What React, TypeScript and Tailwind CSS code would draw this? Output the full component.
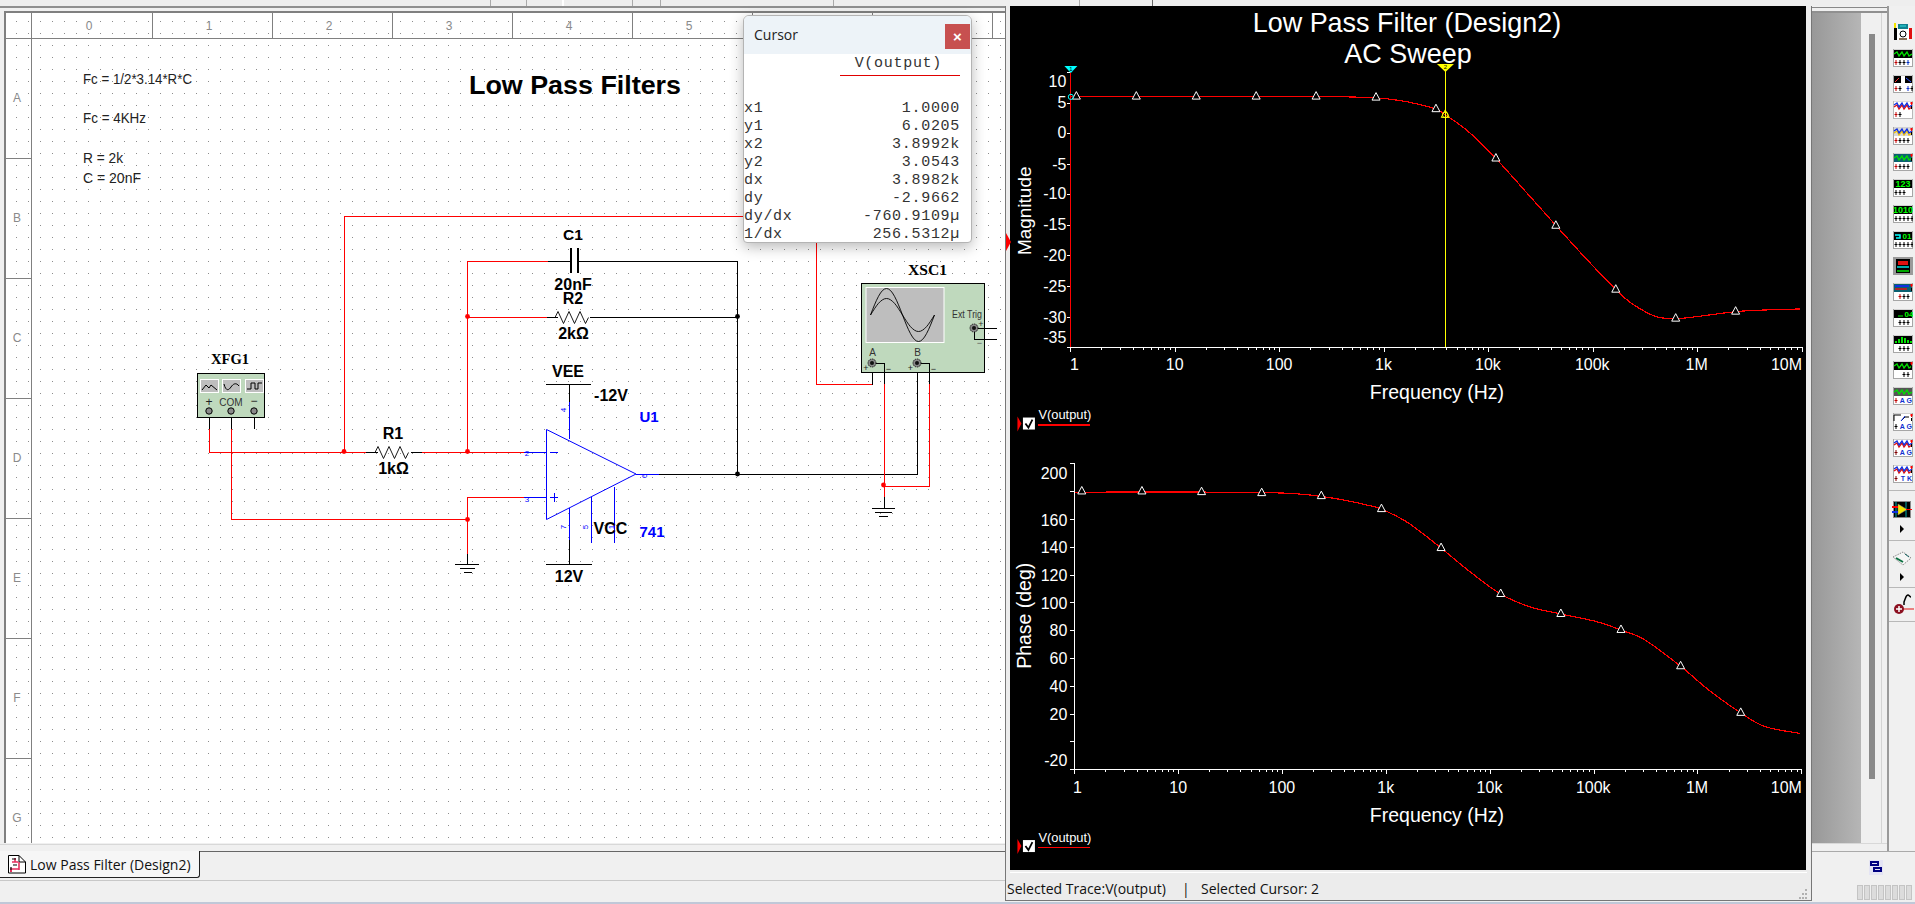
import React from "react";

const SANS = "'Liberation Sans', Arial, sans-serif";
const SERIF = "'Liberation Serif', serif";
const RED = "#ff0000";
const BLUE = "#0000ff";

type TextProps = {
  x: number;
  y: number;
  size: number;
  fill?: string;
  bold?: boolean;
  anchor?: "start" | "middle" | "end";
  family?: string;
  width?: number;
  rotate?: number;
  children: React.ReactNode;
};

const T = ({ x, y, size, fill = "#000", bold, anchor = "middle", family = SANS, width, rotate, children }: TextProps) => (
  <text
    x={x}
    y={y}
    fontSize={size}
    fill={fill}
    fontWeight={bold ? 700 : 400}
    textAnchor={anchor}
    fontFamily={family}
    dominantBaseline="central"
    textLength={width}
    lengthAdjust={width ? "spacingAndGlyphs" : undefined}
    transform={rotate ? `rotate(${rotate} ${x} ${y})` : undefined}
  >
    {children}
  </text>
);

const Wire = ({ d, c = "#000", w = 1 }: { d: string; c?: string; w?: number }) => (
  <path d={d} fill="none" stroke={c} strokeWidth={w} shapeRendering="crispEdges" />
);

const Dot = ({ x, y, c = RED }: { x: number; y: number; c?: string }) => <circle cx={x} cy={y} r={2.4} fill={c} />;

const Zig = ({ x, y }: { x: number; y: number }) => {
  const s = 5.5;
  const pts = [
    [x, y],
    [x + 3, y - 6],
    [x + 3 + s, y + 6],
    [x + 3 + s * 2, y - 6],
    [x + 3 + s * 3, y + 6],
    [x + 3 + s * 4, y - 6],
    [x + 3 + s * 5, y + 6],
    [x + 3 + s * 5 + 3, y],
  ];
  return <polyline points={pts.map((p) => p.join(",")).join(" ")} fill="none" stroke="#000" strokeWidth={0.9} />;
};

const Term = ({ x, y, r = 4 }: { x: number; y: number; r?: number }) => (
  <g>
    <circle cx={x} cy={y} r={r} fill="#8a8a8a" stroke="#000" strokeWidth={0.8} strokeDasharray="1.5 0.8" />
    <circle cx={x} cy={y} r={r - 2} fill="#111" />
  </g>
);

const sine = (amp: number) => {
  const out: string[] = [];
  for (let i = 0; i <= 64; i += 2) {
    out.push(`${870.5 + i},${(315 - amp * Math.sin((2 * Math.PI * i) / 64)).toFixed(1)}`);
  }
  return out.join(" ");
};

const Schematic = () => {
  const cols = [152, 272, 392, 512, 632, 752, 872, 992];
  const rows = [158, 278, 398, 518, 638, 758];
  return (
    <svg width={999} height={830} viewBox="6 13 999 830" className="block bg-white">
      <defs>
        <pattern id="grid" x={4} y={9} width={12} height={12} patternUnits="userSpaceOnUse">
          <rect width={1} height={1} fill="#8c8c8c" />
        </pattern>
      </defs>
      <rect x={6} y={13} width={999} height={830} fill="url(#grid)" />

      <Wire d="M6 38.5H1005M31.5 13V843" c="#808080" />
      {cols.map((x) => (
        <Wire key={x} d={`M${x + 0.5} 13V38`} c="#808080" />
      ))}
      {rows.map((y) => (
        <Wire key={y} d={`M6 ${y + 0.5}H31`} c="#808080" />
      ))}
      {["0", "1", "2", "3", "4", "5", "6", "7"].map((l, i) => (
        <T key={l} x={89 + i * 120} y={26} size={12} fill="#8a8a8a">
          {l}
        </T>
      ))}
      {["A", "B", "C", "D", "E", "F", "G"].map((l, i) => (
        <T key={l} x={17} y={98 + i * 120} size={12} fill="#8a8a8a">
          {l}
        </T>
      ))}

      <T x={83} y={78.5} size={14.5} anchor="start" fill="#222" width={109}>
        Fc = 1/2*3.14*R*C
      </T>
      <T x={83} y={118} size={14.5} anchor="start" fill="#222" width={63}>
        Fc = 4KHz
      </T>
      <T x={83} y={157.5} size={14.5} anchor="start" fill="#222" width={40}>
        R = 2k
      </T>
      <T x={83} y={177.5} size={14.5} anchor="start" fill="#222" width={58}>
        C = 20nF
      </T>
      <T x={575} y={85} size={25} bold width={212}>
        Low Pass Filters
      </T>

      {/* wires into the scope, passing under the cursor window */}
      <Wire d="M344.5 452V216.5H816.5V384.5H872.5" c={RED} />
      <Wire d="M872.5 384.5V363" />
      <Wire d="M209.5 411V429" />
      <Wire d="M209.5 429V452.5H366" c={RED} />
      <Wire d="M366 452.5H378M411 452.5H422" />
      <Wire d="M422 452.5H524" c={RED} />
      <Wire d="M524 452.5H547" c={BLUE} />
      <Wire d="M231.5 411V429" />
      <Wire d="M231.5 429V519.5H467.5" c={RED} />
      <Wire d="M467.5 554V497.5H524" c={RED} />
      <Wire d="M524 497.5H547" c={BLUE} />
      <Wire d="M467.5 554V564.5" />
      <Wire d="M455 564.5H479M460 568.5H475M464 572.5H472" />
      <Wire d="M254.5 411V429" />

      <Wire d="M467.5 452V261.5H548" c={RED} />
      <Wire d="M548 261.5H570M578 261.5H737.5V474.5" />
      <Wire d="M570.5 248V273M571.5 248V273M577.5 248V273M578.5 248V273" />
      <Wire d="M467.5 317.5H547" c={RED} />
      <Wire d="M547 317.5H558M590 317.5H737.5" />
      <Zig x={555} y={317.5} />
      <Zig x={375} y={452.5} />

      <Dot x={344} y={451.5} />
      <Dot x={467.5} y={451.5} />
      <Dot x={467.5} y={316.5} />
      <Dot x={467.5} y={519.5} />
      <Dot x={737.5} y={316.5} c="#000" />
      <Dot x={737.5} y={474} c="#000" />
      <Dot x={883.5} y={485} />

      <T x={573} y={234} size={15.5} bold>
        C1
      </T>
      <T x={573} y={284} size={16} bold>
        20nF
      </T>
      <T x={573} y={298} size={16} bold>
        R2
      </T>
      <T x={573.5} y={333} size={16} bold>
        2kΩ
      </T>
      <T x={393} y={433} size={16} bold>
        R1
      </T>
      <T x={393.5} y={468} size={16} bold>
        1kΩ
      </T>

      {/* op amp */}
      <polygon points="546.5,429.5 546.5,519.5 636,474" fill="none" stroke={BLUE} strokeWidth={1} />
      <Wire d="M569.5 402V439M569.5 508V540M591.5 497V543M614.5 487V543M636 474.5H659M550 452.5H558M550 497.5H558M554.5 493V502" c={BLUE} />
      <Wire d="M569.5 384.5V402M569.5 540V564.5M546 384.5H591M546 564.5H592M659 474.5H917.5V363" />
      <T x={563.5} y={410} size={8} fill={BLUE} rotate={-90}>
        4
      </T>
      <T x={527} y={453} size={8} fill={BLUE}>
        2
      </T>
      <T x={527} y={499} size={8} fill={BLUE}>
        3
      </T>
      <T x={644} y={476} size={8} fill={BLUE} rotate={-90}>
        6
      </T>
      <T x={563} y={527} size={8} fill={BLUE} rotate={-90}>
        7
      </T>
      <T x={585.5} y={527} size={8} fill={BLUE} rotate={-90}>
        5
      </T>
      <T x={611} y={527} size={8} fill={BLUE} rotate={-90}>
        1
      </T>
      <T x={568} y={371} size={16} bold>
        VEE
      </T>
      <T x={611} y={395} size={16} bold>
        -12V
      </T>
      <T x={649} y={416} size={15} bold fill={BLUE}>
        U1
      </T>
      <T x={652} y={531} size={15} bold fill={BLUE}>
        741
      </T>
      <T x={610.5} y={528} size={16} bold>
        VCC
      </T>
      <T x={569} y={576} size={16} bold>
        12V
      </T>

      {/* function generator */}
      <T x={230} y={359} size={14} bold family={SERIF} width={38}>
        XFG1
      </T>
      <rect x={197.5} y={373.5} width={67} height={44} fill="#bfd9bd" stroke="#000" />
      {[200, 222, 245].map((x) => (
        <rect key={x} x={x + 0.5} y={379.5} width={18} height={13} fill="#bebebe" stroke="#fff" />
      ))}
      <polyline points="202,390 206,385 209,388 211,385 217,390" fill="none" stroke="#000" />
      <path d="M224 384 C226 392 229 390 231 387 C233 384 236 382 239 386" fill="none" stroke="#000" />
      <path d="M247 389H251V383H255V389H258V383H262" fill="none" stroke="#000" />
      <T x={209} y={402} size={12} fill="#222">
        +
      </T>
      <T x={231} y={402} size={10} fill="#333">
        COM
      </T>
      <T x={254} y={401} size={12} fill="#222">
        −
      </T>
      <circle cx={209} cy={411} r={3.2} fill="#8a8a8a" stroke="#000" />
      <circle cx={231} cy={411} r={3.2} fill="#8a8a8a" stroke="#000" />
      <circle cx={254} cy={411} r={3.2} fill="#8a8a8a" stroke="#000" />

      {/* oscilloscope */}
      <T x={927.5} y={270} size={14} bold family={SERIF} width={39}>
        XSC1
      </T>
      <rect x={861.5} y={283.5} width={123} height={89} fill="#bfd9bd" stroke="#000" />
      <rect x={866} y={287.5} width={78} height={55} fill="#bebebe" stroke="#fff" />
      <polyline points={sine(26.5)} fill="none" stroke="#000" strokeWidth={0.9} />
      <polyline points={sine(16.5)} fill="none" stroke="#000" strokeWidth={0.9} />
      <T x={967} y={314} size={10} fill="#333" width={30}>
        Ext Trig
      </T>
      <T x={872.5} y={352.5} size={10} fill="#333">
        A
      </T>
      <T x={917.5} y={352} size={10} fill="#333">
        B
      </T>
      <T x={866} y={368} size={9} fill="#222">
        +
      </T>
      <T x={888.5} y={368.5} size={9} fill="#222">
        −
      </T>
      <T x={910.5} y={368} size={9} fill="#222">
        +
      </T>
      <T x={933.5} y={368.5} size={9} fill="#222">
        −
      </T>
      <T x={981} y={324} size={9} fill="#333">
        +
      </T>
      <T x={979.5} y={343} size={9} fill="#555">
        −
      </T>
      <Wire d="M974.5 328.5H997M974.5 328.5V339.5H997M872.5 363.5H884.5V384M917.5 363.5H929.5V384M884.5 497V508.5M872 508.5H895M875 512.5H892M879 516.5H888" />
      <Wire d="M884.5 384V497M884.5 486.5H929.5V384" c={RED} />
      <Term x={974} y={328} />
      <Term x={872} y={363} />
      <Term x={917} y={363} />
    </svg>
  );
};

const Marker = ({ x, y }: { x: number; y: number }) => (
  <polygon points={`${x},${y - 5} ${x + 4},${y + 2.5} ${x - 4},${y + 2.5}`} fill="#000" stroke="#fff" strokeWidth={1} />
);

const DECADES = ["1", "10", "100", "1k", "10k", "100k", "1M", "10M"];

const XAxis = ({ x0, dec, y, labelY, titleY, firstX }: { x0: number; dec: number; y: number; labelY: number; titleY: number; firstX: number }) => {
  const minors: number[] = [];
  for (let d = 0; d < 7; d++) {
    for (let m = 2; m < 10; m++) minors.push(x0 + (d + Math.log10(m)) * dec);
  }
  return (
    <g>
      <Wire d={`M${x0} ${y + 0.5}H${x0 + 7 * dec + 1}`} c="#fff" />
      {minors.map((x) => (
        <Wire key={x} d={`M${Math.round(x) + 0.5} ${y}V${y + 3}`} c="#fff" />
      ))}
      {DECADES.map((_, i) => (
        <Wire key={i} d={`M${Math.round(x0 + i * dec) + 0.5} ${y}V${y + 5}`} c="#fff" />
      ))}
      {DECADES.map((l, i) => (
        <T key={l} x={i === 0 ? firstX : i === 7 ? x0 + 7 * dec + 1 : x0 + i * dec} y={labelY} size={16} fill="#fff" anchor={i === 7 ? "end" : "middle"}>
          {l}
        </T>
      ))}
      <T x={1438} y={titleY} size={19.5} fill="#fff">
        Frequency (Hz)
      </T>
    </g>
  );
};

const Legend = ({ y }: { y: number }) => (
  <g>
    <polygon points={`1018,${y - 8} 1022,${y - 1} 1018,${y + 7}`} fill={RED} />
    <rect x={1023.5} y={y - 7} width={12} height={12} fill="#fff" />
    <polyline points={`${1026},${y - 1} ${1029},${y + 3} ${1033},${y - 5}`} fill="none" stroke="#000" strokeWidth={1.8} />
    <T x={1039} y={y - 9.5} size={12} fill="#fff" anchor="start" width={53}>
      V(output)
    </T>
    <Wire d={`M1039 ${y + 0.5}H1091`} c={RED} w={1.5} />
  </g>
);

const magTrace = [
  [1071, 96.5],
  [1317, 96.5],
  [1340, 96.8],
  [1377, 98],
  [1400, 100.5],
  [1420, 104.5],
  [1437, 109.3],
  [1446.3, 115],
  [1468.3, 130.7],
  [1497, 158.7],
  [1526.7, 191.7],
  [1557.3, 226],
  [1586.7, 258.3],
  [1617.3, 290],
  [1633.3, 304],
  [1656.7, 316.7],
  [1677.3, 319],
  [1700, 316.7],
  [1737.3, 312],
  [1766.7, 310.3],
  [1801.7, 309.3],
];
const magMarks = [
  [1077, 96.7],
  [1137, 96.7],
  [1197, 96.7],
  [1257, 96.7],
  [1317, 96.7],
  [1377, 97.7],
  [1437, 109.3],
  [1497, 158.7],
  [1557, 226],
  [1617, 290],
  [1677, 319],
  [1737, 312],
];
const magTicks = [
  ["10", 72, 82],
  ["5", 102.6, 103],
  ["0", 133, 133],
  ["-5", 163.6, 165],
  ["-10", 194.2, 194],
  ["-15", 224.8, 225],
  ["-20", 255.4, 256],
  ["-25", 286, 287],
  ["-30", 316.6, 318],
  ["-35", 347.2, 338],
] as const;

// phase points read in the cropped view, mapped back to page pixels
const ph = ([x, y]: number[]) => [1011 + x / 1.96, 440 + y / 3];
const phaseTrace = [
  [127, 158],
  [440, 158],
  [560, 163],
  [640, 178],
  [700, 197],
  [728, 209],
  [780, 250],
  [845, 326],
  [900, 395],
  [962, 464],
  [1020, 503],
  [1080, 524],
  [1150, 547],
  [1198, 572],
  [1245, 602],
  [1315, 681],
  [1370, 752],
  [1433, 821],
  [1480, 862],
  [1550, 883],
].map(ph);
const phaseMarks = [
  [140, 156],
  [258, 156],
  [375, 158],
  [493, 161],
  [610, 170],
  [728, 209],
  [845, 326],
  [962, 464],
  [1080, 524],
  [1198, 572],
  [1315, 681],
  [1433, 821],
].map(ph);
const phaseLabels = [
  ["200", 474],
  ["160", 520.7],
  ["140", 548.3],
  ["120", 576],
  ["100", 603.7],
  ["80", 631.7],
  ["60", 659.7],
  ["40", 687.3],
  ["20", 715],
  ["-20", 761.7],
] as const;

// catmull-rom through the read points so the trace has no corners
const smooth = (pts: number[][]) => {
  let d = `M${pts[0][0].toFixed(1)} ${pts[0][1].toFixed(1)}`;
  for (let i = 0; i < pts.length - 1; i++) {
    const p0 = pts[Math.max(i - 1, 0)];
    const p1 = pts[i];
    const p2 = pts[i + 1];
    const p3 = pts[Math.min(i + 2, pts.length - 1)];
    const c1 = [p1[0] + (p2[0] - p0[0]) / 6, p1[1] + (p2[1] - p0[1]) / 6];
    const c2 = [p2[0] - (p3[0] - p1[0]) / 6, p2[1] - (p3[1] - p1[1]) / 6];
    d += `C${c1[0].toFixed(1)} ${c1[1].toFixed(1)} ${c2[0].toFixed(1)} ${c2[1].toFixed(1)} ${p2[0].toFixed(1)} ${p2[1].toFixed(1)}`;
  }
  return d;
};

const Trace = ({ pts }: { pts: number[][] }) => <path d={smooth(pts)} fill="none" stroke={RED} strokeWidth={1.2} shapeRendering="crispEdges" />;

const Plot = () => (
  <svg width={796} height={865} viewBox="1011 6 796 865" className="block bg-black">
    <T x={1408} y={23} size={27} fill="#fff">
      Low Pass Filter (Design2)
    </T>
    <T x={1409} y={54} size={27} fill="#fff">
      AC Sweep
    </T>

    {/* magnitude */}
    <T x={1025} y={211} size={19} fill="#fff" rotate={-90}>
      Magnitude
    </T>
    {magTicks.map(([l, tick, ly]) => (
      <g key={l}>
        <Wire d={`M1068 ${Math.round(tick) + 0.5}H1071`} c="#fff" />
        <T x={1067} y={ly} size={16} fill="#fff" anchor="end">
          {l}
        </T>
      </g>
    ))}
    <XAxis x0={1071} dec={104.5} y={347} labelY={365} titleY={392} firstX={1075} />
    <Trace pts={magTrace} />
    {magMarks.map(([x, y]) => (
      <Marker key={x} x={x} y={y} />
    ))}
    <Wire d="M1071.5 71V347" c={RED} />
    <polygon points="1065,66 1078,66 1071.5,73" fill="#00ffff" />
    <T x={1071.5} y={69} size={6} fill="#000">
      1
    </T>
    <circle cx={1071.5} cy={97} r={2.6} fill="none" stroke="#00ffff" />
    <Wire d="M1446.5 70V347" c="#ffff00" />
    <polygon points="1438,64 1455,64 1446.5,72" fill="#ffff00" />
    <T x={1446.5} y={67} size={6} fill="#000">
      2
    </T>
    <polygon points="1446.3,110 1450.3,117.5 1442.3,117.5" fill="none" stroke="#ffff00" />
    <circle cx={1446.3} cy={115} r={2.8} fill="none" stroke="#ffff00" />
    <Legend y={425} />

    {/* phase */}
    <T x={1025} y={616.5} size={19.5} fill="#fff" rotate={-90}>
      Phase (deg)
    </T>
    <Wire d="M1075.5 464V770" c="#fff" />
    {[464.5, 492.5, 520.5, 548.5, 576.5, 603.5, 631.5, 659.5, 687.5, 715.5, 742.5, 770.5].map((y) => (
      <Wire key={y} d={`M1071 ${y}H1075`} c="#fff" />
    ))}
    {phaseLabels.map(([l, y]) => (
      <T key={l} x={1068} y={y} size={16} fill="#fff" anchor="end">
        {l}
      </T>
    ))}
    <XAxis x0={1075} dec={103.9} y={770} labelY={788} titleY={815.5} firstX={1078} />
    <Trace pts={phaseTrace} />
    {phaseMarks.map(([x, y]) => (
      <Marker key={x} x={x} y={y} />
    ))}
    <Legend y={848} />
  </svg>
);

const rows = [
  ["x1", "1.0000"],
  ["y1", "6.0205"],
  ["x2", "3.8992k"],
  ["y2", "3.0543"],
  ["dx", "3.8982k"],
  ["dy", "-2.9662"],
  ["dy/dx", "-760.9109µ"],
  ["1/dx", "256.5312µ"],
];

const CursorWindow = () => (
  <div className="absolute left-[743px] top-[15px] z-10 flex h-[228px] w-[229px] flex-col overflow-hidden rounded-t-[6px] rounded-b-[4px] border border-[#b4b4b4] bg-white shadow-[0_4px_14px_rgba(0,0,0,0.28)]">
    <div className="flex h-[38px] shrink-0 items-start justify-between bg-[#edf3f8] pr-[1px]">
      <span className="mt-[9px] ml-[10px] font-['Open_Sans'] text-[14px] leading-[20px] text-[#222]">Cursor</span>
      <div className="mt-[8px] flex h-[25px] w-[25px] items-center justify-center bg-[#c75050] font-['Liberation_Sans'] text-[15px] font-bold leading-none text-white">
        ×
      </div>
    </div>
    <div className="flex flex-col font-['Liberation_Mono'] text-[15px] leading-[18px] tracking-[0.7px] text-[#333]">
      <div className="flex h-[21px] justify-end pr-[29px] pt-[1px]">V(output)</div>
      <div className="ml-[96px] mr-[11px] h-px bg-[#e00000]" />
      <div className="h-[24px]" />
      {rows.map(([k, v]) => (
        <div key={k} className="flex h-[18px] justify-between pr-[11px]">
          <span>{k}</span>
          <span>{v}</span>
        </div>
      ))}
    </div>
  </div>
);

const TabIcon = () => (
  <svg width={20} height={20} viewBox="0 0 20 20" className="shrink-0">
    <path d="M1.5 1.5H12L18.5 8V19H1.5Z" fill="#fff" stroke="#000" />
    <path d="M12 1.5V8H18.5" fill="none" stroke="#000" />
    <path d="M8 4V8M5 8H11M3 15H12M12 8V16" fill="none" stroke="#e5315d" strokeWidth={1.6} />
    <path d="M5 5H9M6 11H10M4 13V18" fill="none" stroke="#000" strokeWidth={1.2} />
    <rect x={3} y={16} width={2} height={2} fill="#e5315d" />
  </svg>
);

// Small instrument buttons of the right hand toolbar
type ToolProps = { screen?: string; frame?: string; children?: React.ReactNode; pins?: string[]; label?: string };

const Tool = ({ screen = "#000", frame = "#a6a6a6", children, pins = [], label }: ToolProps) => (
  <svg width={20} height={18} viewBox="0 0 20 18" className="block shrink-0">
    <rect width={20} height={18} fill="#fff" />
    <path d="M0 0H20M0 17.5H20" stroke={frame} />
    <path d="M0.5 0V18M19.5 0V18" stroke={frame} />
    <rect x={1} y={1} width={18} height={8} fill={screen} />
    {children}
    {pins.map((c, i) => (
      <g key={i}>
        <path d={`M${3 + i * 4} 11V16M${1.5 + i * 4} 13.5H${4.5 + i * 4}`} stroke={c} strokeWidth={1} />
      </g>
    ))}
    {label && (
      <text x={19} y={16} textAnchor="end" fontSize={7} fontWeight={700} fill="#1030d0" fontFamily={SANS}>
        {label}
      </text>
    )}
  </svg>
);

const Wave = ({ c = "#00e000", y = 5 }: { c?: string; y?: number }) => (
  <path d={`M1 ${y}L4 ${y - 2}L6 ${y + 2}L9 ${y - 2}L11 ${y + 2}L14 ${y - 2}L16 ${y + 2}L19 ${y}`} fill="none" stroke={c} strokeWidth={1.3} />
);

const Side = () => (
  <g>
    <path d="M17 2H20M18.5 1V4" stroke={RED} />
    <path d="M18.5 5V8" stroke="#000" />
  </g>
);

const ChipIcon = () => (
  <svg width={20} height={19} viewBox="0 0 20 19" className="block shrink-0">
    <rect x={1} y={1} width={18} height={17} fill="#8a8a8a" />
    <rect x={2} y={2} width={16} height={15} fill="#000" />
    <path d="M14 2V17M4 2V17" stroke="#0aa" />
    <polygon points="6,4 15,9.5 6,15" fill="#f2e600" stroke="#888" strokeWidth={0.5} />
    <path d="M0 7H6" stroke={RED} strokeWidth={2} />
    <path d="M0 12H6" stroke="#1030e0" strokeWidth={2} />
    <path d="M14 9.5H20" stroke={RED} />
  </svg>
);

const Toolbar = () => (
  <div className="flex h-[845px] w-[28px] flex-col border-l-2 border-[#9a9a9a] pt-[17px]">
    <div className="flex flex-col gap-[8px] pl-[4px]">
      <svg width={20} height={18} viewBox="0 0 20 18" className="block">
        <rect x={1} y={0} width={2} height={5} fill="#f2e600" />
        <rect x={1} y={5} width={3} height={12} fill="#000" />
        <rect x={16} y={5} width={3} height={11} fill="#e01010" />
        <rect x={5} y={1} width={10} height={5} fill="#108090" />
        <path d="M7 3H13" stroke="#30e0e0" />
        <rect x={4} y={6} width={12} height={11} fill="#fff" />
        <circle cx={10} cy={11} r={3} fill="none" stroke="#000" />
        <path d="M6 16H14" stroke="#604020" strokeWidth={1.5} />
      </svg>
      <Tool pins={["#c00000", "#000", "#000", "#0030c0"]}>
        <Wave />
      </Tool>
      <Tool screen="#fff" pins={["#c00000", "#000", "#fff", "#1030d0", "#000"]}>
        <rect x={1} y={1} width={7} height={7} fill="#000" />
        <rect x={12} y={1} width={7} height={7} fill="#000" />
        <path d="M2 7L6 3" stroke="#ff3030" />
        <path d="M13 3L18 7" stroke="#3050ff" />
      </Tool>
      <Tool screen="#fff" frame="#b8b8b8" pins={["#c00000", "#000"]}>
        <Wave c="#e01010" y={6} />
        <Wave c="#1030e0" y={4} />
        <Side />
      </Tool>
      <Tool screen="#d8d8d8" pins={["#c00000", "#000", "#000", "#000"]}>
        <Wave c="#f0c000" y={6} />
        <Wave c="#1030e0" y={4} />
        <Side />
      </Tool>
      <Tool screen="#0a6070" pins={["#c00000", "#000", "#000", "#000"]}>
        <Wave />
        <Side />
      </Tool>
      <Tool pins={["#000", "#000", "#000"]}>
        <text x={10} y={8} textAnchor="middle" fontSize={9} fontWeight={700} fill="#00ff00" fontFamily={SANS}>
          123
        </text>
      </Tool>
      <Tool pins={["#000", "#000", "#000", "#000", "#000"]}>
        <text x={10} y={8} textAnchor="middle" fontSize={9} fontWeight={700} fill="#00ff00" fontFamily={SANS}>
          1010
        </text>
      </Tool>
      <Tool pins={["#000", "#000", "#000", "#000", "#000"]}>
        <path d="M2 4H7V7H3" fill="none" stroke="#00ffff" strokeWidth={1.5} />
        <text x={14} y={8} textAnchor="middle" fontSize={8} fontWeight={700} fill="#00ff00" fontFamily={SANS}>
          01
        </text>
      </Tool>
      <Tool screen="#000" frame="#8a8a8a">
        <rect x={0} y={0} width={20} height={18} fill="#9a9a9a" />
        <rect x={3} y={2} width={14} height={14} fill="#000" />
        <path d="M5 4H15V8H5Z" fill="#e01010" />
        <path d="M4 10H16" stroke="#00e0e0" strokeWidth={1.5} />
        <path d="M4 14H16" stroke="#00e000" strokeWidth={1.5} />
      </Tool>
      <Tool screen="#0a6070" pins={["#fff", "#c00000", "#000", "#000"]}>
        <path d="M2 3H16" stroke="#1030e0" strokeWidth={2} />
        <path d="M2 6H14" stroke="#e01010" strokeWidth={1.5} />
        <Side />
      </Tool>
      <Tool pins={["#fff", "#000", "#000", "#000"]}>
        <path d="M5 7H10" stroke="#00ff00" />
        <text x={16} y={8} textAnchor="middle" fontSize={8} fontWeight={700} fill="#00ff00" fontFamily={SANS}>
          04
        </text>
      </Tool>
      <Tool pins={["#fff", "#000", "#000", "#000"]}>
        <path d="M3 8V6M6 8V4M9 8V2M12 8V3M15 8V5M18 8V6" stroke="#00e000" strokeWidth={2} />
      </Tool>
      <Tool pins={["#fff", "#fff", "#000", "#000"]}>
        <Wave />
        <Side />
      </Tool>
      <Tool screen="#555" label="A G" pins={["#c00000"]}>
        <Wave />
      </Tool>
      <Tool screen="#fff" label="A G" pins={["#000"]}>
        <path d="M1 8V2H8M8 8L12 4H16" fill="none" stroke="#000" />
        <path d="M8 8L12 3" stroke="#1030e0" />
        <Side />
      </Tool>
      <Tool screen="#fff" label="A G" pins={["#800000"]}>
        <Wave c="#e01010" y={6} />
        <Wave c="#1030e0" y={4} />
        <Side />
      </Tool>
      <Tool screen="#fff" label="T K" pins={["#800000"]}>
        <Wave c="#e01010" y={6} />
        <Wave c="#1030e0" y={4} />
        <Side />
      </Tool>
    </div>
    <div className="mt-[7px] h-px bg-[#b8b8b8]" />
    <div className="flex flex-col items-center pt-[9px] pr-[1px]">
      <ChipIcon />
      <span className="mt-[6px] h-0 w-0 border-y-[4px] border-l-[4px] border-y-transparent border-l-black" />
    </div>
    <div className="mt-[7px] h-px bg-[#b8b8b8]" />
    <div className="flex flex-col items-center pt-[10px] pr-[1px]">
      <svg width={20} height={15} viewBox="0 0 20 15" className="block">
        <polygon points="1,6 11,1 19,7 11,14" fill="#f6f6f6" stroke="#888" strokeDasharray="1.5 1" />
        <path d="M4 7L11 11" stroke="#0a7040" strokeWidth={2} />
        <path d="M13 3L17 6" stroke="#106060" />
      </svg>
      <span className="mt-[7px] h-0 w-0 border-y-[4px] border-l-[4px] border-y-transparent border-l-black" />
    </div>
    <div className="mt-[6px] h-px bg-[#b8b8b8]" />
    <div className="flex h-[33px] items-center pl-[4px]">
      <svg width={21} height={21} viewBox="0 0 21 21" className="block">
        <path d="M11 11L11 8C13 3 13 1 15 1C16 1 17 3 18 3" fill="none" stroke="#000" strokeWidth={1.5} />
        <path d="M10 15H21" stroke="#e01010" />
        <circle cx={6} cy={15} r={5} fill="#8c1020" />
        <path d="M3 15H9M6 12V18" stroke="#fff" strokeWidth={1.5} />
      </svg>
    </div>
    <div className="h-px bg-[#b8b8b8]" />
  </div>
);

export default function App() {
  return (
    <div className="relative flex h-[904px] w-[1915px] flex-col overflow-hidden bg-[#f0f0f0]">
      <div className="flex h-[6px] shrink-0 bg-[#eeeeee]">
        <div className="w-[490px]" />
        <div className="w-[36px] border-l border-[#aaa]" />
        <div className="w-[36px] border-l border-[#aaa]" />
        <div className="w-[70px] border-l-2 border-white" />
        <div className="w-[28px] border-l border-[#aaa]" />
        <div className="w-[173px] border-l border-[#aaa]" />
        <div className="w-[236px] border-l border-[#aaa]" />
        <div className="w-[10px]" />
        <div className="w-[73px] border-l border-[#aaa]" />
        <div className="border-l border-[#666]" />
      </div>

      <div className="flex h-[896px]">
        <div className="flex w-[1005px] shrink-0 flex-col">
          <div className="h-[2px] bg-[#8f8f8f]" />
          <div className="h-[3px]" />
          <div className="ml-[4px] border-t-2 border-l-2 border-[#808080]">
            <Schematic />
          </div>
          <div className="mt-[1px] h-px bg-[#d8d8d8]" />
          <div className="mt-[6px] flex h-[51px] flex-col border-t border-[#666]">
            <div className="-mt-px flex h-[27px] w-[200px] items-center gap-[3px] rounded-br-[3px] border-r border-b border-[#222] border-t-transparent bg-[#f6f6f6] pl-[7px]">
              <TabIcon />
              <span className="font-['Open_Sans'] text-[14px] text-[#111]">Low Pass Filter (Design2)</span>
            </div>
            <div className="mt-[2px] h-px bg-[#c8c8c8]" />
          </div>
        </div>

        <div className="flex h-[895px] w-[807px] shrink-0 flex-col border-r border-b border-l border-[#777] bg-[#ececec] pr-[4px] pl-[4px]">
          <Plot />
          <div className="mt-[2px] h-[1px] bg-white" />
          <div className="mt-[3px] -ml-[3px] flex h-[24px] items-center font-['Open_Sans'] text-[14px] text-[#111]">
            <span className="w-[175px]">Selected Trace:V(output)</span>
            <span className="w-[19px]">|</span>
            <span>Selected Cursor: 2</span>
            <svg width={8} height={10} viewBox="0 0 8 10" className="mt-[12px] ml-auto">
              <path d="M6 0h2v2H6zM3 4h2v2H3zM6 4h2v2H6zM0 8h2v2H0zM3 8h2v2H3zM6 8h2v2H6z" fill="#b0b0b0" />
            </svg>
          </div>
        </div>

        <div className="flex flex-1 flex-col">
          <div className="flex h-[845px]">
            <div className="flex w-[75px] flex-col">
              <div className="mt-[1px] h-[4px] border-t border-[#888]" />
              <div className="h-[2px] bg-[#909090]" />
              <div className="flex h-[830px]">
                <div className="w-[49px] bg-gradient-to-r from-[#989898] to-[#b6b6b6]" />
                <div className="w-[8px]" />
                <div className="mt-[21px] mb-[64px] w-[6px] bg-[#8a8a8a]" />
                <div className="w-[7px] border-r border-[#d4d4d4]" />
              </div>
              <div className="h-px bg-[#d8d8d8]" />
            </div>
            <Toolbar />
          </div>
          <div className="flex flex-1 flex-col border-t border-[#aaa]">
            <div className="mt-[8px] ml-[57px] flex h-[15px] w-[14px] flex-col gap-px bg-[#e4e4f4] p-px">
              <div className="h-[5px] w-[9px] border-2 border-[#000080]" />
              <div className="ml-[3px] h-[5px] w-[9px] border-2 border-[#000080]" />
            </div>
            <div className="mt-[10px] flex h-[15px] gap-[1px] pl-[45px]">
              {[0, 1, 2, 3, 4, 5, 6, 7].map((i) => (
                <div key={i} className="w-[6px] border border-[#c4c4c4] bg-[#dcdcdc]" />
              ))}
            </div>
          </div>
        </div>
      </div>

      <div className="h-[2px] bg-[#c0c8d8]" />
      <div className="absolute left-[1006px] top-[233px] h-0 w-0 border-y-[9.5px] border-l-[5px] border-y-transparent border-l-[#ff0000]" />
      <CursorWindow />
    </div>
  );
}
